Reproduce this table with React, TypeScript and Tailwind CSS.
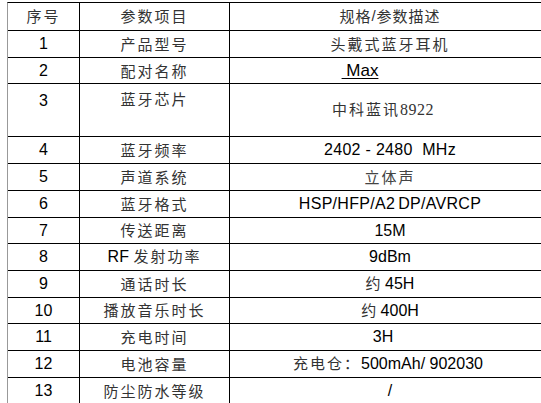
const sans = "font-['Liberation_Sans','Noto_Sans_CJK_SC',sans-serif]";
const cjk = "font-['Noto_Sans_CJK_SC',sans-serif]";

type Row = {
  no: string;
  name: React.ReactNode;
  desc: React.ReactNode;
  h: string;
  tall?: boolean;
};

const rows: Row[] = [
  { no: "1", name: "产品型号", h: "h-[27px]", desc: <span className={`${cjk} text-[15px] tracking-[2px] text-[#333]`}>头戴式蓝牙耳机</span> },
  {
    no: "2",
    name: "配对名称",
    h: "h-[26px]",
    desc: (
      <span className={`${sans} text-[17px] text-black underline underline-offset-2 -ml-[60px] whitespace-pre`}>
        {" Max"}
      </span>
    ),
  },
  {
    no: "3",
    name: "蓝牙芯片",
    h: "h-[53px]",
    tall: true,
    desc: (
      <span className="text-[15px] text-[#333] -ml-[14px] tracking-[2px]">
        <span className={cjk}>中科蓝讯</span>
        <span className="font-['Liberation_Serif',serif] text-[16px] tracking-[0.5px]">8922</span>
      </span>
    ),
  },
  { no: "4", name: "蓝牙频率", h: "h-[27px]", desc: <span className={`${sans} text-[16px] text-black whitespace-pre tracking-[0.3px]`}>2402 - 2480  MHz</span> },
  { no: "5", name: "声道系统", h: "h-[27px]", desc: <span className={`${cjk} text-[15px] tracking-[2px] text-[#444]`}>立体声</span> },
  { no: "6", name: "蓝牙格式", h: "h-[27px]", desc: <span className={`${sans} text-[16px] text-black tracking-[0.3px]`}>HSP/HFP/A2<span className="ml-[3px]">DP/AVRCP</span></span> },
  { no: "7", name: "传送距离", h: "h-[26px]", desc: <span className={`${sans} text-[16px] text-black`}>15M</span> },
  {
    no: "8",
    name: (
      <span className="whitespace-pre">
        <span className={`${sans} tracking-normal text-black text-[16px]`}>RF </span>发射功率
      </span>
    ),
    h: "h-[27px]",
    desc: <span className={`${sans} text-[16px] text-black`}>9dBm</span>,
  },
  { no: "9", name: "通话时长", h: "h-[27px]", desc: <span className={`${sans} text-[16px] text-black whitespace-pre`}><span className="text-[#333] text-[15px]">约</span> 45H</span> },
  { no: "10", name: "播放音乐时长", h: "h-[26px]", desc: <span className={`${sans} text-[16px] text-black whitespace-pre`}><span className="text-[#333] text-[15px]">约</span> 400H</span> },
  { no: "11", name: "充电时间", h: "h-[27px]", desc: <span className={`${sans} text-[16px] text-black -ml-[14px]`}>3H</span> },
  {
    no: "12",
    name: "电池容量",
    h: "h-[27px]",
    desc: (
      <span className={`${sans} text-[16px] text-black whitespace-pre -ml-[4px]`}>
        <span className="text-[#333] text-[15px] tracking-[2px]">充电仓：</span>500mAh/ 902030
      </span>
    ),
  },
  { no: "13", name: "防尘防水等级", h: "h-[27px]", desc: <span className={`${sans} text-[16px] text-black`}>/</span> },
];

export default function App() {
  return (
    <div className="w-[541px] h-[403px] overflow-hidden bg-white pt-[2px]">
      <div className="w-[543px] ml-[7px] border-t border-l border-t-black border-l-[#999]">
        <div className="grid grid-cols-[72px_150px_1fr] h-[28px] border-b border-black">
          <div className={`border-r border-black flex items-center justify-center ${cjk} text-[15px] tracking-[2px] text-[#333]`}>序号</div>
          <div className={`border-r border-black flex items-center justify-center ${cjk} text-[15px] tracking-[2px] text-[#333]`}>参数项目</div>
          <div className={`flex items-center justify-center ${cjk} text-[15px] tracking-[1px] text-[#333]`}>
            规格<span className={sans}>/</span>参数描述
          </div>
        </div>
        {rows.map((r) => (
          <div key={r.no} className={`grid grid-cols-[72px_150px_1fr] ${r.h} border-b border-black`}>
            <div
              className={`border-r border-black flex justify-center ${sans} text-[16px] text-black ${r.tall ? "items-start pt-[5px]" : "items-center"}`}
            >
              {r.no}
            </div>
            <div
              className={`border-r border-black flex justify-center ${cjk} text-[15px] tracking-[2px] text-[#333] ${r.tall ? "items-start pt-[4px]" : "items-center"}`}
            >
              {r.name}
            </div>
            <div className="flex items-center justify-center">{r.desc}</div>
          </div>
        ))}
      </div>
    </div>
  );
}
